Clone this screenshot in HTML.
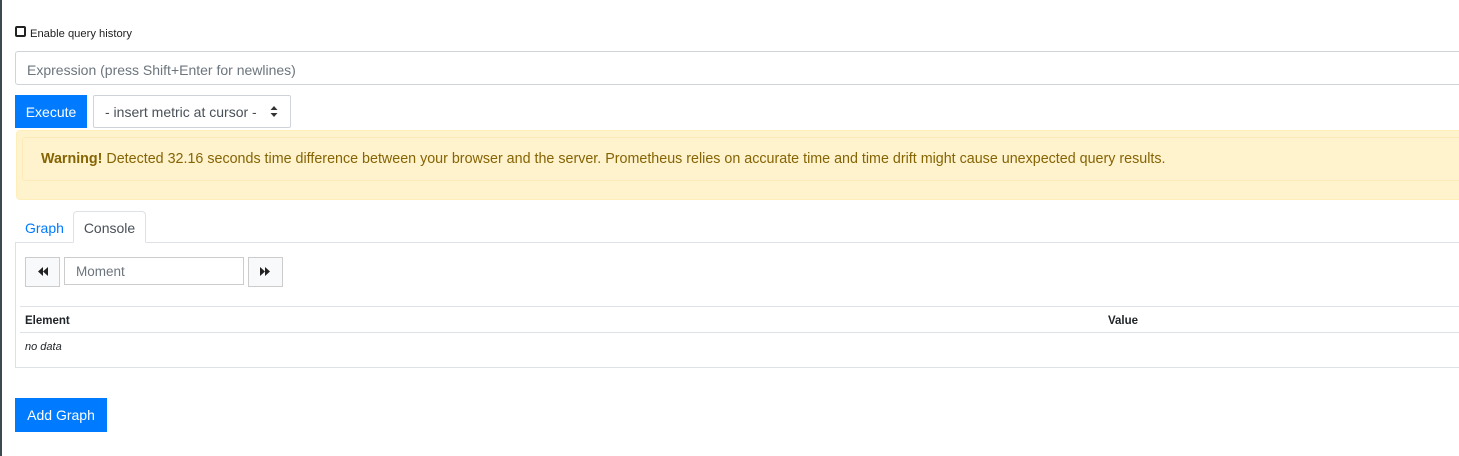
<!DOCTYPE html>
<html><head><meta charset="utf-8"><style>
*{box-sizing:border-box;margin:0;padding:0}
body{width:1459px;height:456px;overflow:hidden;background:#fff;font-family:"Liberation Sans",sans-serif;color:#212529;position:relative}
.a{position:absolute}
.strip{left:0;top:0;width:2px;height:456px;background:#3b4a52}
</style></head><body>
<div class="a strip"></div>
<div class="a" style="left:15px;top:26px;width:11px;height:11px;border:2px solid #222;border-radius:2px"></div>
<div class="a" style="left:30px;top:27px;font-size:11.2px;line-height:14px;color:#222">Enable query history</div>

<div class="a" style="left:15px;top:51px;width:1460px;height:34px;border:1px solid #ced4da;border-radius:3px"></div>
<div class="a" style="left:27px;top:62px;font-size:14px;line-height:16px;color:#6c757d">Expression (press Shift+Enter for newlines)</div>

<div class="a" style="left:15px;top:95px;width:72px;height:33px;background:#007bff;color:#fff;font-size:14px;line-height:34px;text-align:center">Execute</div>
<div class="a" style="left:93px;top:95px;width:198px;height:33px;border:1px solid #ced4da;border-radius:2px;font-size:14px;line-height:32px;color:#495057;padding-left:11px">- insert metric at cursor -</div>
<svg class="a" style="left:270px;top:106px" width="8" height="11" viewBox="0 0 8 11"><path d="M4 0L7.5 4H0.5Z M4 11L7.5 7H0.5Z" fill="#333"/></svg>

<div class="a" style="left:16px;top:130px;width:1460px;height:70px;background:#fff3cd;border:1px solid #ffeeba;border-radius:4px"></div>
<div class="a" style="left:22px;top:137px;width:1460px;height:44px;border:1px solid #fdeab8;border-radius:3px"></div>
<div class="a" style="left:41px;top:151px;font-size:14.3px;line-height:16px;color:#856404;white-space:nowrap"><b>Warning!</b> Detected 32.16 seconds time difference between your browser and the server. Prometheus relies on accurate time and time drift might cause unexpected query results.</div>

<div class="a" style="left:15px;top:242px;width:1460px;height:126px;border:1px solid #dee2e6"></div>
<div class="a" style="left:73px;top:211px;width:73px;height:32px;border:1px solid #dee2e6;border-bottom:1px solid #fff;border-radius:4px 4px 0 0;background:#fff;font-size:14px;line-height:32px;text-align:center;color:#495057">Console</div>
<div class="a" style="left:25px;top:220px;font-size:14px;line-height:16px;color:#007bff">Graph</div>

<div class="a" style="left:25px;top:257px;width:35px;height:30px;border:1px solid #ccc;background:#f8f9fa"></div>
<svg class="a" style="left:38px;top:267px" width="10" height="9" viewBox="0 0 10 9"><path d="M0 4.5L5 0V9Z M5 4.5L10 0V9Z" fill="#222"/></svg>
<div class="a" style="left:64px;top:257px;width:180px;height:28px;border:1px solid #ccc;font-size:13.5px;line-height:28px;color:#6c757d;padding-left:11px">Moment</div>
<div class="a" style="left:248px;top:257px;width:35px;height:30px;border:1px solid #ccc;background:#f8f9fa"></div>
<svg class="a" style="left:260px;top:267px" width="10" height="9" viewBox="0 0 10 9"><path d="M0 0L5 4.5L0 9Z M5 0L10 4.5L5 9Z" fill="#222"/></svg>

<div class="a" style="left:20px;top:306px;width:1450px;height:1px;background:#dee2e6"></div>
<div class="a" style="left:25px;top:314px;font-size:11.5px;font-weight:bold;line-height:14px">Element</div>
<div class="a" style="left:1108px;top:314px;font-size:11.5px;font-weight:bold;line-height:14px">Value</div>
<div class="a" style="left:20px;top:332px;width:1450px;height:1px;background:#dee2e6"></div>
<div class="a" style="left:25px;top:340px;font-size:11px;font-style:italic;line-height:14px">no data</div>

<div class="a" style="left:15px;top:398px;width:92px;height:34px;background:#007bff;color:#fff;font-size:14px;line-height:35px;text-align:center">Add Graph</div>
</body></html>
